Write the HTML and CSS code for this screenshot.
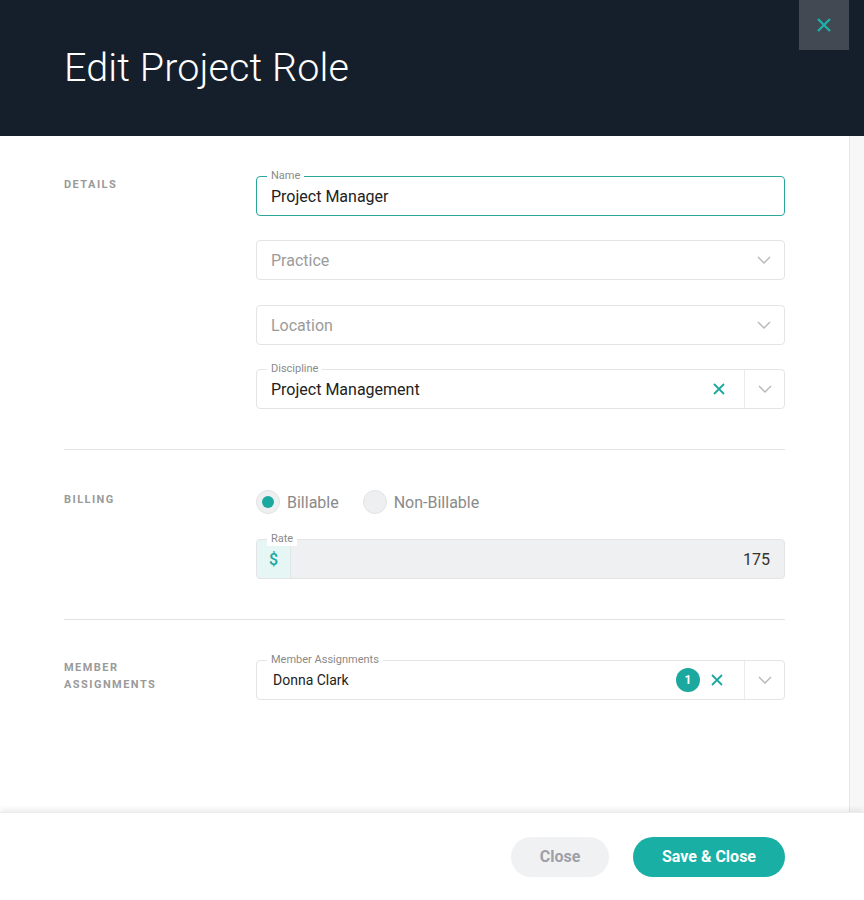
FILE: index.html
```html
<!DOCTYPE html>
<html>
<head>
<meta charset="utf-8">
<link rel="stylesheet" href="styles.css">
</head>
<body>
<div class="modal">
  <header class="header">
    <h1 class="title">Edit Project Role</h1>
    <button class="close-x" aria-label="Close">
      <svg width="14" height="14" viewBox="0 0 14 14"><path d="M1 1L13 13M13 1L1 13" stroke="#1db3aa" stroke-width="2.2" fill="none"/></svg>
    </button>
  </header>
  <div class="body">
    <div class="scroll">
      <section class="section first">
        <div class="sec-label">DETAILS</div>
        <div class="fields">
          <div class="field focused">
            <span class="float">Name</span>
            <span class="value">Project Manager</span>
          </div>
          <div class="field">
            <span class="value placeholder">Practice</span>
            <span class="chev"><svg width="14" height="8" viewBox="0 0 14 8"><path d="M1 1L7 7L13 1" stroke="#b5b7bb" stroke-width="1.4" fill="none"/></svg></span>
          </div>
          <div class="field shift">
            <span class="value placeholder">Location</span>
            <span class="chev"><svg width="14" height="8" viewBox="0 0 14 8"><path d="M1 1L7 7L13 1" stroke="#b5b7bb" stroke-width="1.4" fill="none"/></svg></span>
          </div>
          <div class="field">
            <span class="float">Discipline</span>
            <span class="value">Project Management</span>
            <span class="clear"><svg width="12" height="12" viewBox="0 0 12 12"><path d="M1 1L11 11M11 1L1 11" stroke="#1aa89f" stroke-width="1.8" fill="none"/></svg></span>
            <span class="chev divided"><svg width="14" height="8" viewBox="0 0 14 8"><path d="M1 1L7 7L13 1" stroke="#b5b7bb" stroke-width="1.4" fill="none"/></svg></span>
          </div>
        </div>
      </section>
      <section class="section billing">
        <div class="sec-label bill">BILLING</div>
        <div class="fields">
          <div class="radios">
            <label class="radio"><span class="dot on"></span>Billable</label>
            <label class="radio"><span class="dot"></span>Non-Billable</label>
          </div>
          <div class="field rate">
            <span class="float">Rate</span>
            <span class="prefix">$</span>
            <span class="value num">175</span>
          </div>
        </div>
      </section>
      <section class="section last">
        <div class="sec-label member">MEMBER<br>ASSIGNMENTS</div>
        <div class="fields">
          <div class="field">
            <span class="float">Member Assignments</span>
            <span class="value small">Donna Clark</span>
            <span class="badge">1</span>
            <span class="clear tight"><svg width="12" height="12" viewBox="0 0 12 12"><path d="M1 1L11 11M11 1L1 11" stroke="#1aa89f" stroke-width="1.8" fill="none"/></svg></span>
            <span class="chev divided"><svg width="14" height="8" viewBox="0 0 14 8"><path d="M1 1L7 7L13 1" stroke="#b5b7bb" stroke-width="1.4" fill="none"/></svg></span>
          </div>
        </div>
      </section>
    </div>
    <div class="scrollbar"></div>
  </div>
  <footer class="footer">
    <button class="btn secondary">Close</button>
    <button class="btn primary">Save &amp; Close</button>
  </footer>
</div>
</body>
</html>
```
FILE: styles.css
```css
* { box-sizing: border-box; }
html, body { margin: 0; padding: 0; }
body {
  font-family: Roboto, "Liberation Sans", Arial, sans-serif;
  background: #fff;
  width: 864px;
  height: 900px;
  overflow: hidden;
}
.modal {
  display: flex;
  flex-direction: column;
  height: 900px;
}
.header {
  height: 136px;
  background: #151f2b;
  position: relative;
  flex: none;
}
.title {
  margin: 0;
  padding: 44px 0 0 64px;
  font-weight: 300;
  font-size: 39.5px;
  line-height: 48px;
  color: #fff;
  letter-spacing: 0.1px;
}
.close-x {
  position: absolute;
  top: 0;
  right: 15px;
  width: 50px;
  height: 50px;
  border: 0;
  background: #424953;
  display: flex;
  align-items: center;
  justify-content: center;
  padding: 0;
}
.body {
  flex: 1;
  display: flex;
  min-height: 0;
}
.scroll {
  flex: 1;
  padding: 0 64px 0 64px;
}
.scrollbar {
  width: 15px;
  background: #f7f7f7;
  border-left: 1px solid #e6e6e6;
}
.section {
  display: flex;
  border-bottom: 1px solid #e2e2e2;
  padding: 40px 0 40px;
}
.section.first { padding-bottom: 40px; }
.section.billing { padding-top: 39px; }
.section.last { border-bottom: 0; padding-top: 40px; }
.sec-label {
  width: 192px;
  flex: none;
  font-size: 11px;
  font-weight: 700;
  letter-spacing: 1.45px;
  color: #9a9a9a;
  line-height: 17px;
  padding-top: 0;
}
.sec-label.bill { padding-top: 2px; }
.sec-label.member { margin-top: -1px; }
.fields {
  flex: 1;
  display: flex;
  flex-direction: column;
  gap: 24px;
}
.field.shift { margin-top: 1px; }
.field {
  position: relative;
  height: 40px;
  border: 1px solid #e4e4e4;
  border-radius: 4px;
  display: flex;
  align-items: center;
  padding-left: 14px;
  background: #fff;
}
.field.focused { border-color: #2aa8a0; }
.float {
  position: absolute;
  left: 10px;
  top: -8px;
  padding: 0 4px;
  background: #fff;
  font-size: 11px;
  line-height: 14px;
  color: #8a8a8a;
}
.value {
  flex: 1;
  font-size: 16px;
  color: #222;
  padding-top: 1px;
}
.value.placeholder { color: #9b9b9b; }
.value.small { font-size: 14px; padding-left: 2px; padding-top: 0; }
.chev {
  width: 40px;
  height: 38px;
  display: flex;
  align-items: center;
  justify-content: center;
}
.chev.divided { border-left: 1px solid #eaeaea; }
.clear {
  width: 50px;
  height: 38px;
  display: flex;
  align-items: center;
  justify-content: center;
}
.clear.tight { width: 44px; justify-content: flex-start; padding-left: 11px; }
.badge {
  width: 24px;
  height: 24px;
  border-radius: 50%;
  background: #1aa89f;
  color: #fff;
  font-size: 12px;
  font-weight: 700;
  display: flex;
  align-items: center;
  justify-content: center;
}
.radios {
  display: flex;
  gap: 24px;
  height: 26px;
  align-items: center;
}
.radio {
  display: flex;
  align-items: center;
  gap: 7px;
  font-size: 16px;
  color: #8a8a8a;
}
.dot {
  width: 24px;
  height: 24px;
  border-radius: 50%;
  background: #eeeff1;
  border: 1px solid #e2e3e5;
  display: flex;
  align-items: center;
  justify-content: center;
}
.dot.on::after {
  content: "";
  width: 12px;
  height: 12px;
  border-radius: 50%;
  background: #1aa89f;
}
.billing .fields { gap: 24px; }
.field.rate {
  background: #eff0f2;
  padding-left: 0;
  padding-right: 14px;
}
.field.rate .float { background: #fff; border-radius: 4px 4px 0 0; left: 10px; }
.prefix {
  width: 34px;
  height: 38px;
  background: #e5f6f5;
  border-right: 1px solid #e0e6e6;
  color: #1aa89f;
  font-size: 16px;
  font-weight: 500;
  display: flex;
  align-items: center;
  justify-content: center;
  border-radius: 4px 0 0 4px;
}
.value.num { text-align: right; color: #333; }
.footer {
  height: 88px;
  flex: none;
  display: flex;
  justify-content: flex-end;
  align-items: center;
  gap: 24px;
  padding-right: 79px;
  box-shadow: 0 -3px 5px rgba(0,0,0,0.07);
  border-top: 1px solid #ececec;
  position: relative;
}
.btn {
  height: 40px;
  border: 0;
  border-radius: 20px;
  font-family: Roboto, "Liberation Sans", Arial, sans-serif;
  font-size: 16px;
  font-weight: 700;
  padding: 0;
}
.btn.secondary { width: 98px; background: #f0f1f3; color: #9da0a6; }
.btn.primary { width: 152px; background: #1aafa5; color: #fff; }
```
